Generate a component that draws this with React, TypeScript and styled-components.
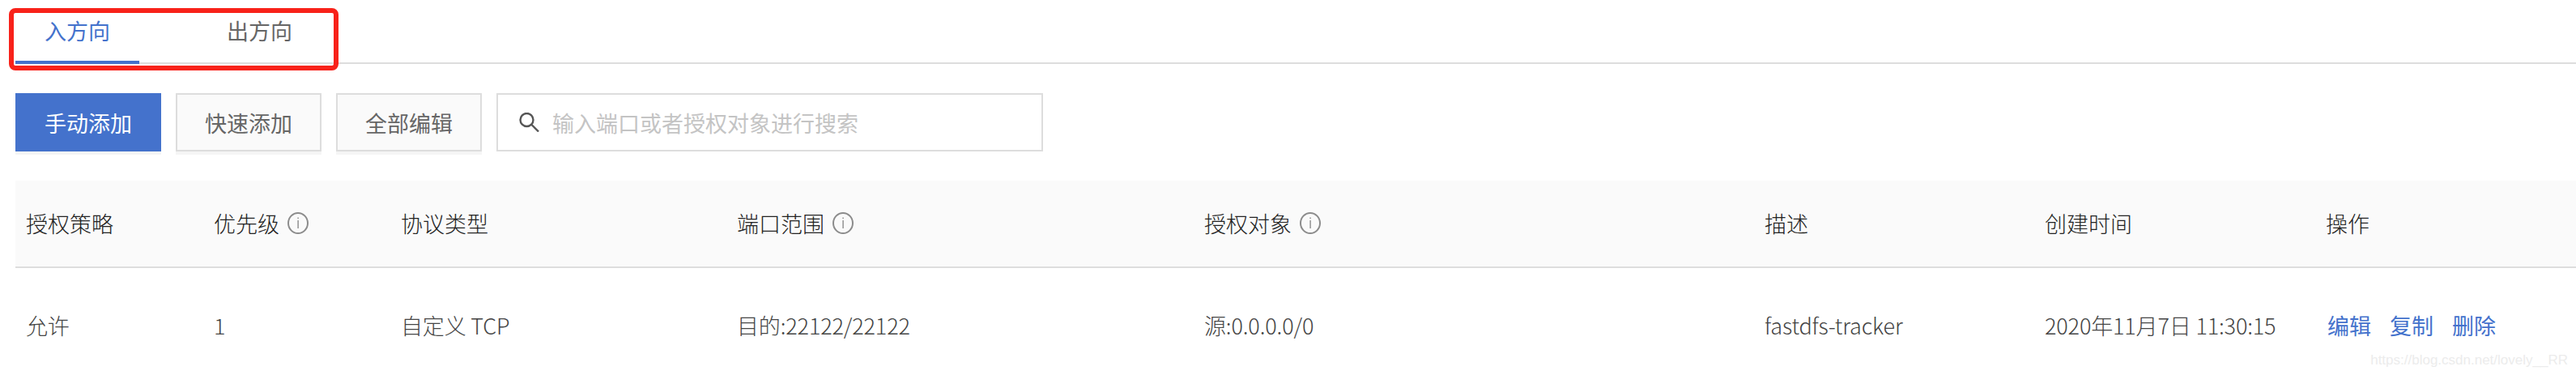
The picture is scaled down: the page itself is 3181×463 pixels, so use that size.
import React from "react";
import styled, { createGlobalStyle } from "styled-components";

const GlobalStyle = createGlobalStyle`
  html, body {
    margin: 0;
    background: #fff;
    overflow: hidden;
  }
  * {
    box-sizing: border-box;
  }
`;

const fonts = `"Noto Sans CJK SC", "Noto Sans", sans-serif`;

const Page = styled.div`
  position: relative;
  width: 3181px;
  height: 463px;
  overflow: hidden;
  font-family: ${fonts};
  font-size: 27px;
  color: #666;
`;

const TabBar = styled.div`
  display: flex;
  gap: 72px;
  height: 79px;
  margin-left: 19px;
  border-bottom: 2px solid #ddd;
`;

const Tab = styled.div<{ $active?: boolean }>`
  width: 153px;
  height: 79px;
  line-height: 75px;
  text-align: center;
  color: ${(p) => (p.$active ? "#4472cc" : "#666")};
  border-bottom: 4px solid ${(p) => (p.$active ? "#4472cc" : "transparent")};
`;

const Highlight = styled.div`
  position: absolute;
  left: 11px;
  top: 10px;
  width: 407px;
  height: 77px;
  border: 6px solid #f8221a;
  border-radius: 8px;
`;

const Toolbar = styled.div`
  display: flex;
  gap: 18px;
  height: 72px;
  margin: 36px 0 36px 19px;
`;

const Button = styled.button<{ $primary?: boolean }>`
  width: 180px;
  height: 72px;
  padding: 0;
  font: inherit;
  color: ${(p) => (p.$primary ? "#fff" : "#666")};
  background: ${(p) => (p.$primary ? "#4472cc" : "#fafafa")};
  border: ${(p) => (p.$primary ? "none" : "2px solid #ddd")};
  box-shadow: 0 4px 0 #f5f5f5;
`;

const SearchBox = styled.label`
  display: flex;
  align-items: center;
  gap: 16px;
  width: 675px;
  height: 72px;
  padding-left: 26px;
  border: 2px solid #ddd;
`;

const SearchInput = styled.input`
  flex: 1;
  min-width: 0;
  padding: 0;
  font: inherit;
  border: none;
  outline: none;
  background: transparent;

  &::placeholder {
    color: #c4c4c4;
    opacity: 1;
  }
`;

const Table = styled.div`
  margin-left: 19px;
  font-weight: 300;
`;

const Row = styled.div`
  display: grid;
  grid-template-columns: 232px 231px 415px 577px 692px 346px 347px 1fr;
  align-items: center;
  padding-left: 13px;
`;

const HeadRow = styled(Row)`
  height: 108px;
  padding-bottom: 2px;
  color: #222;
  background: #fafafa;
  border-bottom: 2px solid #ddd;
`;

const BodyRow = styled(Row)`
  height: 140px;
  color: #444;
`;

const HeadCell = styled.div`
  display: flex;
  align-items: center;
  gap: 10px;
`;

const BodyCell = styled.div`
  letter-spacing: -0.15px;
`;

const Actions = styled.div`
  display: flex;
  gap: 23px;
  padding-left: 2px;
`;

const ActionLink = styled.a`
  color: #4472cc;
  font-weight: 400;
`;

const Watermark = styled.div`
  position: absolute;
  right: 10px;
  bottom: 8px;
  font-family: "Liberation Sans", sans-serif;
  font-size: 17px;
  color: #ececec;
`;

const InfoIcon = () => (
  <svg width="26" height="27" viewBox="0 0 26 27" fill="none">
    <ellipse cx="13" cy="13.5" rx="12" ry="12.5" stroke="#8c8c8c" strokeWidth="2" />
    <rect x="12.4" y="6.5" width="1.4" height="1.6" fill="#8c8c8c" />
    <rect x="12.4" y="10" width="1.4" height="10" fill="#8c8c8c" />
  </svg>
);

const SearchIcon = () => (
  <svg width="25" height="24" viewBox="0 0 25 24" fill="none">
    <circle cx="9.5" cy="9" r="8" stroke="#555" strokeWidth="2.4" />
    <path d="M15.5 15 L24 23.5" stroke="#555" strokeWidth="2.4" />
  </svg>
);

const columns = [
  { label: "授权策略" },
  { label: "优先级", info: true },
  { label: "协议类型" },
  { label: "端口范围", info: true },
  { label: "授权对象", info: true },
  { label: "描述" },
  { label: "创建时间" },
  { label: "操作" },
];

const cells = [
  "允许",
  "1",
  "自定义 TCP",
  "目的:22122/22122",
  "源:0.0.0.0/0",
  "fastdfs-tracker",
  "2020年11月7日 11:30:15",
];

const App = () => {
  return (
    <Page>
      <GlobalStyle />
      <TabBar>
        <Tab $active>入方向</Tab>
        <Tab>出方向</Tab>
      </TabBar>
      <Highlight />
      <Toolbar>
        <Button $primary>手动添加</Button>
        <Button>快速添加</Button>
        <Button>全部编辑</Button>
        <SearchBox>
          <SearchIcon />
          <SearchInput placeholder="输入端口或者授权对象进行搜索" />
        </SearchBox>
      </Toolbar>
      <Table>
        <HeadRow>
          {columns.map((col) => (
            <HeadCell key={col.label}>
              {col.label}
              {col.info && <InfoIcon />}
            </HeadCell>
          ))}
        </HeadRow>
        <BodyRow>
          {cells.map((text) => (
            <BodyCell key={text}>{text}</BodyCell>
          ))}
          <Actions>
            <ActionLink>编辑</ActionLink>
            <ActionLink>复制</ActionLink>
            <ActionLink>删除</ActionLink>
          </Actions>
        </BodyRow>
      </Table>
      <Watermark>https://blog.csdn.net/lovely__RR</Watermark>
    </Page>
  );
};

export default App;
